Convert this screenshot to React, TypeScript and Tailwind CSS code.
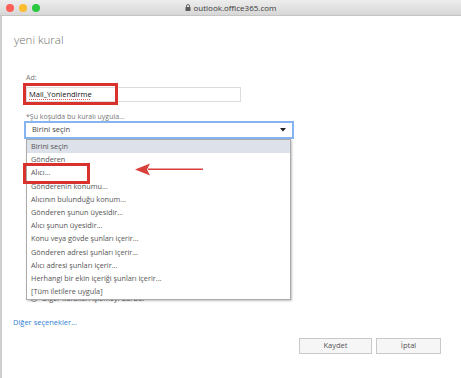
import React from 'react'

const options = [
  'Birini seçin',
  'Gönderen',
  'Alıcı...',
  'Gönderenin konumu...',
  'Alıcının bulunduğu konum...',
  'Gönderen şunun üyesidir...',
  'Alıcı şunun üyesidir...',
  'Konu veya gövde şunları içerir...',
  'Gönderen adresi şunları içerir...',
  'Alıcı adresi şunları içerir...',
  'Herhangi bir ekin içeriği şunları içerir...',
  '[Tüm iletilere uygula]',
]

const TitleBar: React.FC = () => (
  <div className="relative flex h-[16px] items-center border-b border-[#c4c4c4] bg-linear-to-b from-[#ededed] to-[#d7d7d7]">
    <div className="flex items-center gap-[5px] pl-[6px]">
      <span className="h-[8px] w-[8px] rounded-full bg-[#fc5f57]" />
      <span className="h-[8px] w-[8px] rounded-full bg-[#fdbc2e]" />
      <span className="h-[8px] w-[8px] rounded-full bg-[#28c840]" />
    </div>
    <div className="absolute inset-x-0 top-0 flex h-[15px] items-center justify-center gap-[3px]">
      <svg width="6" height="7" viewBox="0 0 6 7">
        <path d="M1.5 3V2a1.5 1.5 0 0 1 3 0v1" fill="none" stroke="#5a5a5a" strokeWidth="0.9" />
        <rect x="0.5" y="3" width="5" height="4" rx="0.6" fill="#5a5a5a" />
      </svg>
      <span className="text-[8px] font-medium leading-none text-[#3a3a3a]">outlook.office365.com</span>
    </div>
  </div>
)

export default function App() {
  return (
    <div
      className="relative flex h-[378px] w-[461px] flex-col overflow-hidden bg-white"
      style={{ fontFamily: '"Open Sans", "Noto Sans", sans-serif' }}
    >
      <TitleBar />
      <div className="flex flex-1 flex-col border-l-2 border-[#cfcfcf]">
        <h1 className="pl-[12px] pt-[17px] text-[11.5px] font-light leading-[14px] text-[#707070]">
          yeni kural
        </h1>

        <div className="mt-[26px] pl-[24px]">
          <p className="text-[7px] leading-[10px] text-[#777]">Ad:</p>
          <div className="relative mt-[4px] flex h-[15px] w-[215px] items-center border border-[#dcdcdc] px-[2px]">
            <span className="text-[7.5px] leading-none text-[#111] underline decoration-[#e06060] decoration-dotted underline-offset-2">
              Mail_Yonlendirme
            </span>
            <span className="absolute left-[-4px] top-[-5px] h-[22px] w-[95px] border-[3px] border-[#d8312e]" />
          </div>

          <p className="mt-[11px] text-[7px] leading-[8px] text-[#777]">*Şu koşulda bu kuralı uygula...</p>
          <div className="relative">
            <div className="-ml-[2px] flex h-[18px] w-[270px] items-center justify-between border-2 border-[#86b4f0] px-[6px]">
              <span className="text-[7.5px] leading-none text-[#444]">Birini seçin</span>
              <svg width="6" height="4" viewBox="0 0 6 4">
                <path d="M0 0h6L3 3.5z" fill="#222" />
              </svg>
            </div>

            <ul className="absolute left-0 top-[18px] z-10 w-[265px] border border-[#aaaaaa] bg-white pb-[1px] shadow-[1px_1px_2px_rgba(0,0,0,0.25)]">
              {options.map((opt, i) => (
                <li
                  className={`relative h-[13.2px] pl-[4px] text-[7.3px] leading-[13px] text-[#555] ${
                    i === 0 ? 'bg-[#dde1e9]' : ''
                  }`}
                  key={opt}
                >
                  {opt}
                  {i === 2 && (
                    <span className="absolute left-[-4px] top-[-3px] h-[21px] w-[67px] border-[3px] border-[#d8312e]" />
                  )}
                </li>
              ))}
            </ul>

            <svg
              className="absolute left-[108px] top-[39px] z-20"
              width="70"
              height="20"
              viewBox="0 0 70 20"
            >
              <path d="M14 9.2h55" stroke="#d9403b" strokeWidth="1.6" />
              <path d="M1 9.5L16 3.5L13 9.5L16 15.5Z" fill="#d9403b" />
            </svg>
          </div>

          <div className="mt-[154px] flex items-center gap-[4px] pl-[4px]">
            <span className="h-[8px] w-[8px] rounded-full border border-[#999]" />
            <span className="text-[7.3px] leading-[10px] text-[#555]">Diğer kuralları işlemeyi durdur</span>
          </div>
        </div>

        <a className="mt-[14px] pl-[11px] text-[7.5px] leading-[10px] text-[#2f7fd6]">Diğer seçenekler...</a>

        <div className="mt-[11px] flex justify-end gap-[4px] pr-[20px]">
          <button className="flex h-[16px] w-[73px] items-center justify-center border border-[#c9c9c9] bg-[#f6f6f6] text-[7.5px] text-[#555]">
            Kaydet
          </button>
          <button className="flex h-[16px] w-[65px] items-center justify-center border border-[#c9c9c9] bg-[#f6f6f6] text-[7.5px] text-[#555]">
            İptal
          </button>
        </div>
      </div>
    </div>
  )
}
